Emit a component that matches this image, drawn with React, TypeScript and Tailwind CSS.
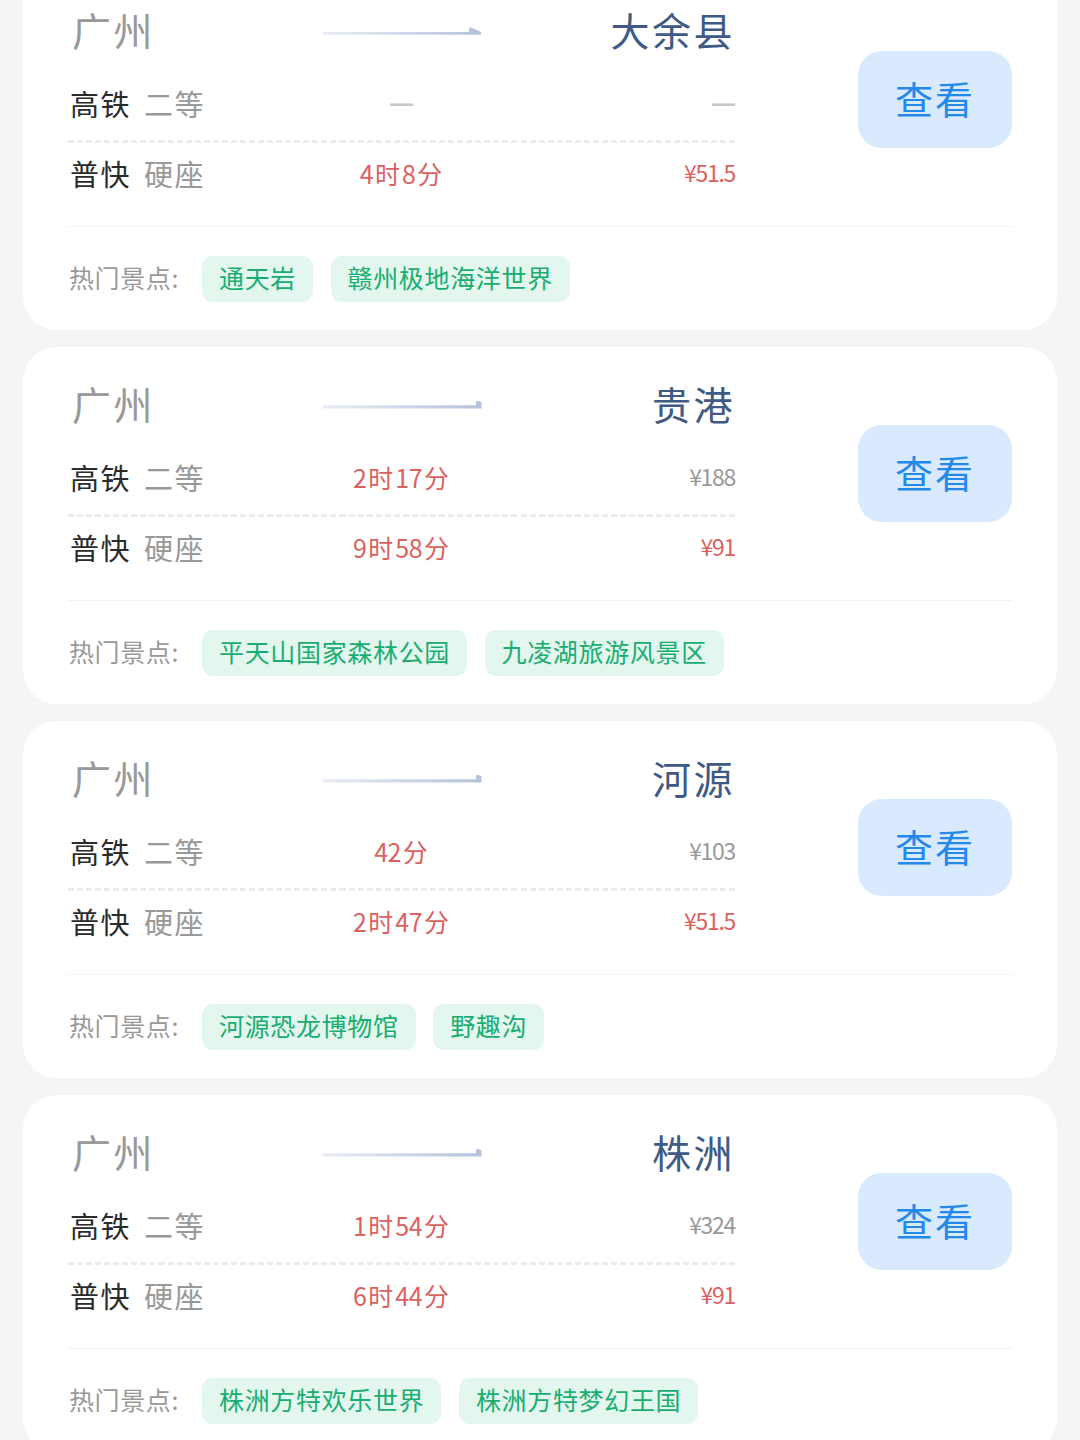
type Fare = { time?: string; price?: string; cheapest?: boolean };

type Trip = {
  to: string;
  fast: Fare;
  slow: Fare;
  spots: string[];
  sharpArrow?: boolean;
};

const trips: Trip[] = [
  {
    to: '大余县',
    fast: {},
    slow: { time: '4时8分', price: '51.5', cheapest: true },
    spots: ['通天岩', '赣州极地海洋世界'],
    sharpArrow: true,
  },
  {
    to: '贵港',
    fast: { time: '2时17分', price: '188' },
    slow: { time: '9时58分', price: '91', cheapest: true },
    spots: ['平天山国家森林公园', '九凌湖旅游风景区'],
  },
  {
    to: '河源',
    fast: { time: '42分', price: '103' },
    slow: { time: '2时47分', price: '51.5', cheapest: true },
    spots: ['河源恐龙博物馆', '野趣沟'],
  },
  {
    to: '株洲',
    fast: { time: '1时54分', price: '324' },
    slow: { time: '6时44分', price: '91', cheapest: true },
    spots: ['株洲方特欢乐世界', '株洲方特梦幻王国'],
  },
];

const Arrow = ({ sharp }: { sharp?: boolean }) => (
  <svg width="160" height="10" viewBox="0 0 160 10" className="mx-auto block">
    <defs>
      <linearGradient id="line" x1="0" y1="0" x2="160" y2="0" gradientUnits="userSpaceOnUse">
        <stop offset="0" stopColor="#e9edf5" />
        <stop offset="1" stopColor="#b3c3dc" />
      </linearGradient>
    </defs>
    <path
      d={sharp ? 'M1 5H147V1Q148 0 150 .7L159 5V7.8H1Z' : 'M1 4.3H154V.5Q156-1 157.5.5L159.5 1V7.4H1Z'}
      fill="url(#line)"
    />
  </svg>
);

const Dash = () => (
  <span className="inline-block pb-px font-['Liberation_Sans','Noto_Sans_CJK_SC',sans-serif] text-[23px] font-bold text-[#c8c8c8]">
    —
  </span>
);

const Time = ({ value }: { value: string }) => (
  <span className="-ml-[3px] inline-block whitespace-nowrap text-[25px] text-[#da625f]">
    {value.split(/(\d+)/).map((part, i) =>
      /\d/.test(part) ? (
        <span key={i} className="mx-[2px] tracking-[-0.6px]">
          {part}
        </span>
      ) : (
        part
      ),
    )}
  </span>
);

const FareRow = ({ train, seat, fare }: { train: string; seat: string; fare: Fare }) => (
  <div className="grid h-[70px] grid-cols-[222px_1fr_222px] items-center pb-[3px] leading-none">
    <div className="flex gap-[13px] pl-[2px] text-[29px] tracking-[1.5px]">
      <span className="text-[#2b2b2b]">{train}</span>
      <span className="text-[#999]">{seat}</span>
    </div>
    <div className="text-center">{fare.time ? <Time value={fare.time} /> : <Dash />}</div>
    <div className="text-right">
      {fare.price ? (
        <span
          className={`block pb-[2px] text-[23px] tracking-[-1.3px] ${fare.cheapest ? 'text-[#da625f]' : 'text-[#999]'}`}
        >
          ¥{fare.price}
        </span>
      ) : (
        <Dash />
      )}
    </div>
  </div>
);

const TripCard = ({ trip }: { trip: Trip }) => (
  <article className="h-[357px] shrink-0 rounded-[34px] bg-white px-[45px]">
    <div className="flex h-[253px] justify-between">
      <div className="w-[667px] pt-[30px]">
        <div className="grid h-[58px] grid-cols-[222px_1fr_222px] items-center text-[39px] leading-none tracking-[2.5px]">
          <span className="pb-[6px] pl-1 text-[#999]">广州</span>
          <Arrow sharp={trip.sharpArrow} />
          <span className="pb-[6px] text-right text-[#3f5a85]">{trip.to}</span>
        </div>
        <div className="mt-[9px]">
          <FareRow train="高铁" seat="二等" fare={trip.fast} />
          <div className="h-[3px] bg-[repeating-linear-gradient(90deg,#e8eef0_0_6px,transparent_6px_9.05px)]" />
          <div className="-mt-[3px]">
            <FareRow train="普快" seat="硬座" fare={trip.slow} />
          </div>
        </div>
      </div>
      <button className="mt-[78px] h-[97px] w-[154px] rounded-[24px] bg-[#d9eaff] pb-[4px] text-[38px] leading-none tracking-[2px] text-[#2389ea]">
        查看
      </button>
    </div>
    <div className="flex h-[76px] items-end border-t border-[#f1f4f5]">
      <div className="flex h-[46px] items-center text-[25px] leading-none">
        <span className="w-[134px] whitespace-nowrap pb-[4px] pl-px tracking-[0.6px] text-[#999]">热门景点:</span>
        <div className="flex gap-[17.5px]">
          {trip.spots.map((spot) => (
            <span
              key={spot}
              className="flex h-[46px] items-center whitespace-nowrap rounded-[11px] bg-[#e3f7ee] px-[17px] pb-[3px] tracking-[0.67px] text-[#19ad72]"
            >
              {spot}
            </span>
          ))}
        </div>
      </div>
    </div>
  </article>
);

export default function App() {
  return (
    <main className="h-[1440px] w-[1080px] overflow-hidden bg-[#f5f5f5] font-['Noto_Sans_CJK_SC',sans-serif]">
      <div className="-mt-[27px] flex flex-col gap-[17px] px-[23px]">
        {trips.map((trip) => (
          <TripCard key={trip.to} trip={trip} />
        ))}
      </div>
    </main>
  );
}
